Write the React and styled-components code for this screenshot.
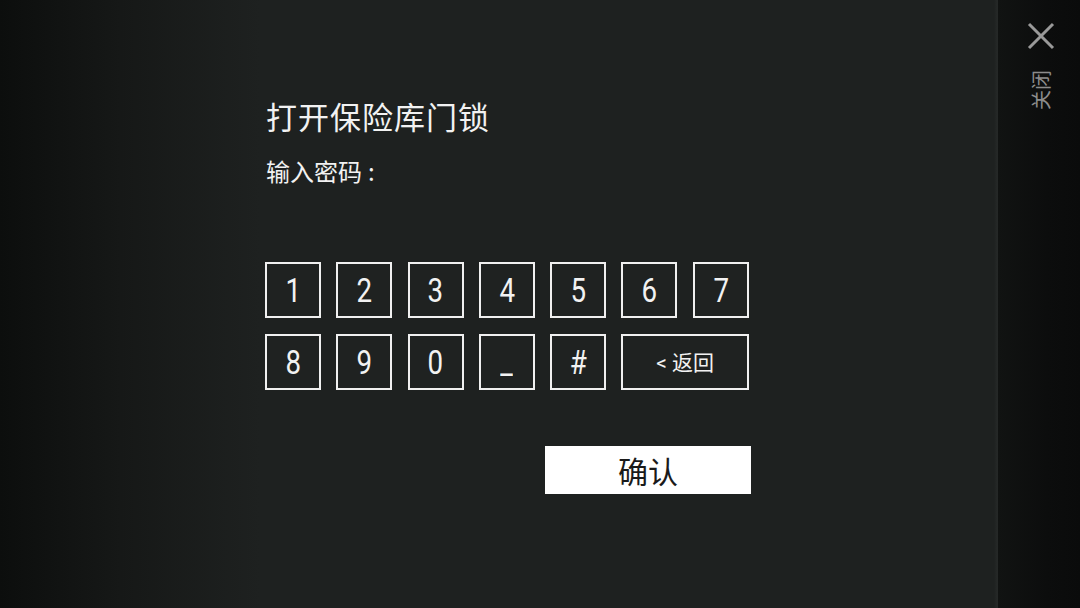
import React from 'react'
import styled, { createGlobalStyle } from 'styled-components'

const GlobalStyle = createGlobalStyle`
  html, body {
    margin: 0;
    padding: 0;
    background: #1e2120;
  }
  * {
    box-sizing: border-box;
  }
`

const Screen = styled.div`
  display: flex;
  width: 1080px;
  height: 608px;
  overflow: hidden;
  font-family: Roboto, "Noto Sans CJK SC", sans-serif;
  color: #f2f2f2;
`

const Main = styled.div`
  flex: 1;
  padding: 97px 0 0 266px;
  background: linear-gradient(to right, #0c0e0d 0px, #161817 120px, #1e2120 260px, #1e2120 994px, #252827 997px);
`

const Title = styled.div`
  font-family: "Noto Sans CJK SC", sans-serif;
  font-size: 31px;
  line-height: 38px;
  letter-spacing: 1px;
`

const Prompt = styled.div`
  margin-top: 21px;
  font-family: "Noto Sans CJK SC", sans-serif;
  font-size: 24px;
  line-height: 30px;
`

const Colon = styled.span`
  margin-left: 6px;
`

const Pad = styled.div`
  margin-top: 76px;
  margin-left: -1px;
  width: 486px;
  display: flex;
  flex-direction: column;
`

const Keys = styled.div`
  display: grid;
  grid-template-columns: repeat(7, 56px);
  grid-auto-rows: 56px;
  column-gap: 15.3px;
  row-gap: 16px;
`

const Key = styled.div`
  grid-column: span ${p => p.$span || 1};
  display: flex;
  align-items: center;
  justify-content: center;
  border: 2px solid #f0f0f0;
  background: #1f2221;
`

const Digit = styled.span`
  display: inline-block;
  font-family: Roboto, sans-serif;
  font-size: 33px;
  line-height: 1;
  transform: scaleX(0.84);
`

const BackLabel = styled.span`
  font-family: Roboto, "Noto Sans CJK SC", sans-serif;
  font-size: 21px;
  line-height: 1;
  margin-top: 2px;
`

const Confirm = styled.button`
  align-self: flex-end;
  margin-top: 56px;
  width: 206px;
  height: 48px;
  border: none;
  background: #ffffff;
  color: #1a1a1a;
  font-family: "Noto Sans CJK SC", sans-serif;
  font-size: 30px;
  line-height: 48px;
  padding: 0;
`

const Side = styled.div`
  width: 82px;
  display: flex;
  flex-direction: column;
  align-items: center;
  padding-top: 22px;
  padding-left: 3px;
  background: linear-gradient(to right, #111312, #0c0d0d 60%, #0a0b0b);
`

const CloseIcon = styled.svg`
  display: block;
  width: 28px;
  height: 28px;
`

const CloseLabel = styled.span`
  display: inline-block;
  margin-top: 30px;
  transform: rotate(-90deg);
  font-family: "Noto Sans CJK SC", sans-serif;
  font-size: 20px;
  line-height: 20px;
  color: #8c8c8c;
  white-space: nowrap;
`

const rows = [
  ['1', '2', '3', '4', '5', '6', '7'],
  ['8', '9', '0', '_', '#'],
]

export default function App() {
  return (
    <Screen>
      <GlobalStyle />
      <Main>
        <Title>打开保险库门锁</Title>
        <Prompt>
          输入密码<Colon>:</Colon>
        </Prompt>
        <Pad>
          <Keys>
            {rows.flat().map(k => (
              <Key key={k}>
                <Digit>{k}</Digit>
              </Key>
            ))}
            <Key $span={2}>
              <BackLabel>&lt; 返回</BackLabel>
            </Key>
          </Keys>
          <Confirm>确认</Confirm>
        </Pad>
      </Main>
      <Side>
        <CloseIcon viewBox="0 0 28 28">
          <path d="M2 2 L26 26 M26 2 L2 26" stroke="#9a9a9a" strokeWidth="3" fill="none" />
        </CloseIcon>
        <CloseLabel>关闭</CloseLabel>
      </Side>
    </Screen>
  )
}
